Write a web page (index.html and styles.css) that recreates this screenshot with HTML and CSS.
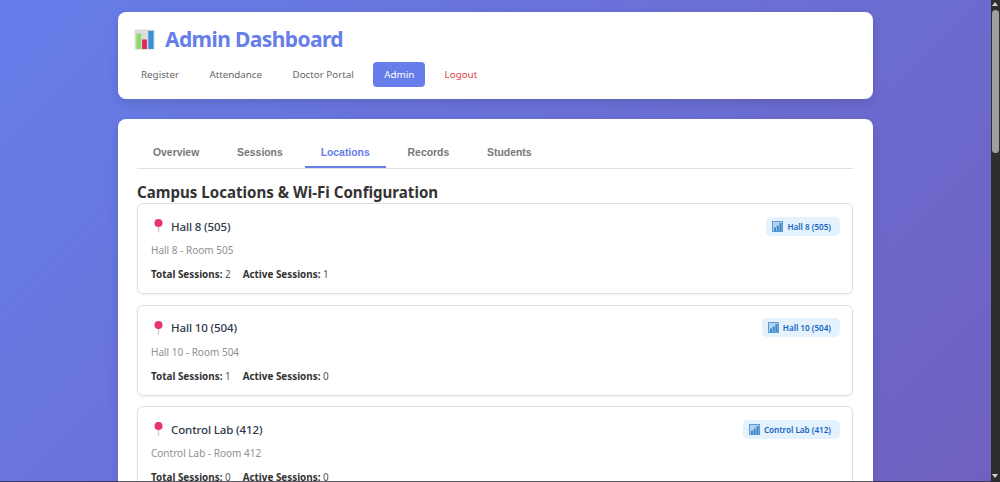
FILE: index.html
```html
<!DOCTYPE html>
<html lang="en">
<head>
<meta charset="utf-8">
<title>Admin Dashboard</title>
<link rel="stylesheet" href="styles.css">
</head>
<body>
<div class="container">
  <header class="card header">
    <h1 class="title">
      <svg class="chart-icon" viewBox="0 0 22 22" aria-hidden="true">
        <rect x="0.5" y="0.5" width="21" height="21" rx="1.5" fill="#dcdcd8"/>
        <rect x="2.5" y="5" width="5" height="16" fill="#8ddc6a"/>
        <rect x="8.5" y="11" width="5" height="10" fill="#e0245e"/>
        <rect x="15" y="2" width="5.5" height="19" fill="#3b8fd6"/>
      </svg>
      <span>Admin Dashboard</span>
    </h1>
    <nav class="nav">
      <a class="nav-link">Register</a>
      <a class="nav-link">Attendance</a>
      <a class="nav-link">Doctor Portal</a>
      <a class="nav-link active">Admin</a>
      <a class="nav-link logout">Logout</a>
    </nav>
  </header>
  <main class="card panel">
    <div class="tabs">
      <button class="tab">Overview</button>
      <button class="tab">Sessions</button>
      <button class="tab active">Locations</button>
      <button class="tab">Records</button>
      <button class="tab">Students</button>
    </div>
    <h2 class="section-title">Campus Locations &amp; Wi-Fi Configuration</h2>
    <div class="locations">
      <section class="location">
        <div class="loc-head">
          <h3 class="loc-name">
            <svg class="pin" viewBox="0 0 14 16" aria-hidden="true"><rect x="6.8" y="6" width="1.4" height="8.5" fill="#cfcaca"/><circle cx="7.5" cy="5" r="4" fill="#e8336f"/></svg>
            <span>Hall 8 (505)</span>
          </h3>
          <span class="badge">
            <svg class="badge-icon" viewBox="0 0 11 11" aria-hidden="true"><rect x="0.5" y="0.5" width="10" height="10" fill="#b5d3ee" stroke="#5a9bd5"/><path d="M2 10V6.5h2V10zM4.7 10V4.5h2V10zM7.4 10V2h2.2v8z" fill="#3a87cc"/></svg>
            <span>Hall 8 (505)</span>
          </span>
        </div>
        <p class="loc-desc">Hall 8 - Room 505</p>
        <p class="loc-stats"><span class="stat"><b>Total Sessions:</b> 2</span><span class="stat"><b>Active Sessions:</b> 1</span></p>
      </section>
      <section class="location">
        <div class="loc-head">
          <h3 class="loc-name">
            <svg class="pin" viewBox="0 0 14 16" aria-hidden="true"><rect x="6.8" y="6" width="1.4" height="8.5" fill="#cfcaca"/><circle cx="7.5" cy="5" r="4" fill="#e8336f"/></svg>
            <span>Hall 10 (504)</span>
          </h3>
          <span class="badge">
            <svg class="badge-icon" viewBox="0 0 11 11" aria-hidden="true"><rect x="0.5" y="0.5" width="10" height="10" fill="#b5d3ee" stroke="#5a9bd5"/><path d="M2 10V6.5h2V10zM4.7 10V4.5h2V10zM7.4 10V2h2.2v8z" fill="#3a87cc"/></svg>
            <span>Hall 10 (504)</span>
          </span>
        </div>
        <p class="loc-desc">Hall 10 - Room 504</p>
        <p class="loc-stats"><span class="stat"><b>Total Sessions:</b> 1</span><span class="stat"><b>Active Sessions:</b> 0</span></p>
      </section>
      <section class="location">
        <div class="loc-head">
          <h3 class="loc-name">
            <svg class="pin" viewBox="0 0 14 16" aria-hidden="true"><rect x="6.8" y="6" width="1.4" height="8.5" fill="#cfcaca"/><circle cx="7.5" cy="5" r="4" fill="#e8336f"/></svg>
            <span>Control Lab (412)</span>
          </h3>
          <span class="badge">
            <svg class="badge-icon" viewBox="0 0 11 11" aria-hidden="true"><rect x="0.5" y="0.5" width="10" height="10" fill="#b5d3ee" stroke="#5a9bd5"/><path d="M2 10V6.5h2V10zM4.7 10V4.5h2V10zM7.4 10V2h2.2v8z" fill="#3a87cc"/></svg>
            <span>Control Lab (412)</span>
          </span>
        </div>
        <p class="loc-desc">Control Lab - Room 412</p>
        <p class="loc-stats"><span class="stat"><b>Total Sessions:</b> 0</span><span class="stat"><b>Active Sessions:</b> 0</span></p>
      </section>
    </div>
  </main>
</div>
<aside class="scrollbar" aria-hidden="true">
  <div class="scroll-arrow"></div>
  <div class="scroll-thumb"></div>
  <div class="scroll-arrow-down"></div>
</aside>
<div class="window-edge" aria-hidden="true"></div>
</body>
</html>
```
FILE: styles.css
```css
* { box-sizing: border-box; }
body {
  margin: 0;
  min-height: 1555px;
  padding: 12px 9px 20px 0;
  font-family: "Noto Sans", "Open Sans", sans-serif;
  background: linear-gradient(135deg, #667eea 0%, #764ba2 100%);
  color: #333;
}
.scrollbar { position: fixed; top: 0; right: 0; bottom: 0; width: 9px; background: #2e2e2e; display: flex; flex-direction: column; }
.scroll-arrow { width: 0; height: 0; margin: 2px 0 0 1px; border: solid transparent; border-width: 0 3.5px 4px; border-bottom-color: #d0d0d0; }
.scroll-thumb { width: 7px; height: 143px; margin: 4px 0 0 1px; background: #9f9f9f; border-radius: 4px; }
.scroll-arrow-down { width: 0; height: 0; margin: auto 0 4px 1px; border: solid transparent; border-width: 4px 3.5px 0; border-top-color: #d0d0d0; }
.window-edge { position: fixed; left: 0; right: 0; bottom: 0; height: 1px; background: rgba(40, 40, 50, 0.75); }
.container { width: 755px; margin: 0 auto; display: flex; flex-direction: column; gap: 20px; }
.card { background: #fff; border-radius: 8px; box-shadow: 0 4px 12px rgba(0, 0, 0, 0.12); }
.header { padding: 12px; height: 87px; }
.title { margin: 0; padding-left: 4px; display: flex; align-items: center; gap: 10px; font-size: 21px; letter-spacing: -0.6px; line-height: 30px; font-weight: 700; color: #667eea; }
.chart-icon { width: 21px; height: 21px; flex: none; }
.nav { display: flex; gap: 8.4px; margin-top: 8px; }
.nav-link { padding: 0 11px; height: 25px; line-height: 26px; font-size: 9.8px; color: #666; border-radius: 4px; }
.nav-link.active { background: #667eea; color: #fff; }
.nav-link.logout { color: #e53e3e; }
.panel { padding: 20px 20px 20px 19px; min-height: 600px; }
.tabs { display: flex; gap: 5.9px; border-bottom: 1px solid #e0e0e0; height: 30px; }
.tab { font-family: "Liberation Sans", Arial, sans-serif; font-size: 10.4px; font-weight: 700; color: #777; background: none; border: 0; padding: 0 16px; height: 29px; border-bottom: 2px solid transparent; }
.tab.active { color: #667eea; border-bottom-color: #667eea; }
.section-title { margin: 13px 0 1px; font-size: 15.1px; line-height: 20px; font-weight: 700; color: #333; }
.locations { display: flex; flex-direction: column; gap: 10.6px; }
.location { border: 1px solid #e0e0e0; border-radius: 6px; padding: 12px 12px 0 13px; height: 91px; box-shadow: 0 1px 3px rgba(0, 0, 0, 0.06); }
.loc-head { display: flex; justify-content: space-between; align-items: center; height: 20px; }
.loc-name { margin: 0; display: flex; align-items: center; gap: 6px; font-size: 11.5px; letter-spacing: -0.12px; font-weight: 500; color: #2d3748; }
.pin { width: 14px; height: 16px; }
.badge { display: inline-flex; align-items: center; gap: 4px; height: 19px; padding: 0 9px 0 6px; background: #e3f2fd; border-radius: 5px; color: #1565c0; font-size: 8.15px; font-weight: 600; }
.badge-icon { width: 11px; height: 11px; }
.loc-desc { margin: 6px 0 0; font-size: 10px; line-height: 16px; color: #909090; }
.loc-stats { margin: 8px 0 0; font-size: 9.9px; line-height: 16px; color: #555; display: flex; gap: 12px; }
.stat b { color: #333; font-weight: 700; }
```
